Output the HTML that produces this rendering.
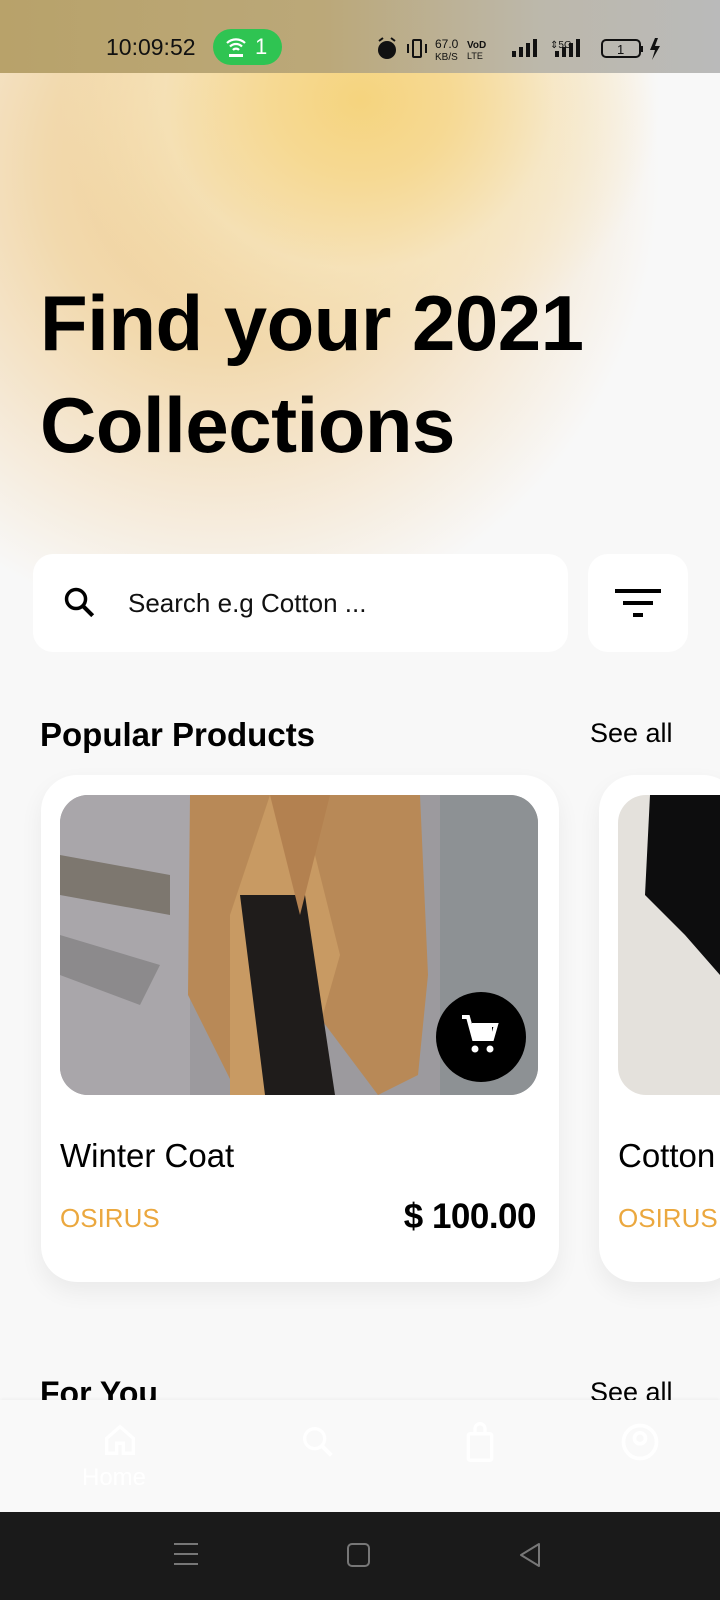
<!DOCTYPE html>
<html><head><meta charset="utf-8"><style>
*{margin:0;padding:0;box-sizing:border-box}
body{width:720px;height:1600px;overflow:hidden;background:#f8f8f8;font-family:"Liberation Sans",sans-serif;position:relative}
.abs{position:absolute}
#bg{left:0;top:0;width:720px;height:720px;background:radial-gradient(ellipse 300px 260px at 360px 100px,#f5d47e 0%,#f6d993 30%,rgba(247,230,190,0.7) 65%,rgba(248,248,248,0) 100%),radial-gradient(ellipse 440px 460px at 220px 170px,#efce94 0%,#f2d9ad 40%,#f5e8d4 70%,rgba(248,248,248,0) 100%)}
#sb{left:0;top:0;width:720px;height:73px;background:linear-gradient(90deg,#b8a26a 0%,#bba879 45%,#bcb8ab 75%,#bababa 100%);font-size:23px;color:#111}
h1{position:absolute;left:40px;top:272px;font-size:78px;line-height:102px;font-weight:bold;color:#000;letter-spacing:-0.5px}
.box{background:#fff;border-radius:20px}
.t{color:#000}
</style></head><body>
<div id="bg" class="abs"></div>
<div id="sb" class="abs">
 <div class="abs" style="left:106px;top:34px;">10:09:52</div>
 <div class="abs" style="left:213px;top:29px;width:69px;height:36px;border-radius:18px;background:#2fc452;color:#fff">
  <svg class="abs" style="left:11px;top:6px" width="24" height="24" viewBox="0 0 24 24"><path d="M3 8a13 13 0 0 1 18 0M6 11.5a8.5 8.5 0 0 1 12 0M9 15a4 4 0 0 1 6 0" stroke="#fff" stroke-width="2.2" fill="none"/><rect x="5" y="19" width="14" height="3" fill="#fff"/></svg>
  <span class="abs" style="left:42px;top:5px;font-size:22px">1</span></div>
 <svg class="abs" style="left:375px;top:36px" width="300" height="26" viewBox="0 0 300 26">
  <circle cx="12" cy="14" r="9" fill="#111"/><path d="M4 5l4-3M20 5l-4-3" stroke="#111" stroke-width="2"/>
  <rect x="38" y="4" width="8" height="17" rx="1" stroke="#111" stroke-width="2" fill="none"/><path d="M33 8v9M51 8v9" stroke="#111" stroke-width="2"/>
  <text x="60" y="12" font-size="12" font-family="Liberation Sans" fill="#111">67.0</text><text x="60" y="24" font-size="10" font-family="Liberation Sans" fill="#111">KB/S</text>
  <text x="92" y="12" font-size="10" font-family="Liberation Sans" font-weight="bold" fill="#111">VoD</text><text x="92" y="23" font-size="9" font-family="Liberation Sans" fill="#111">LTE</text>
  <rect x="137" y="15" width="4" height="6" fill="#111"/><rect x="144" y="11" width="4" height="10" fill="#111"/><rect x="151" y="7" width="4" height="14" fill="#111"/><rect x="158" y="3" width="4" height="18" fill="#111"/>
  <text x="175" y="12" font-size="10" font-family="Liberation Sans" fill="#111">⇕5G</text><rect x="180" y="15" width="4" height="6" fill="#111"/><rect x="187" y="11" width="4" height="10" fill="#111"/><rect x="194" y="7" width="4" height="14" fill="#111"/><rect x="201" y="3" width="4" height="18" fill="#111"/>
  <rect x="227" y="4" width="38" height="17" rx="4" stroke="#111" stroke-width="2" fill="none"/><rect x="266" y="10" width="2" height="6" fill="#111"/><text x="242" y="18" font-size="13" font-family="Liberation Sans" fill="#111">1</text>
  <path d="M280 2l-5 12h5l-3 10 8-14h-5l3-8z" fill="#111"/>
 </svg>
</div>
<h1>Find your 2021<br>Collections</h1>
<div class="abs box" style="left:33px;top:554px;width:535px;height:98px">
 <svg class="abs" style="left:28px;top:30px" width="38" height="38" viewBox="0 0 24 24"><circle cx="9.5" cy="9.5" r="6" stroke="#000" stroke-width="2.2" fill="none"/><path d="M14 14l6 6" stroke="#000" stroke-width="2.6"/></svg>
 <div class="abs" style="left:95px;top:34px;font-size:26px;color:#111">Search e.g Cotton ...</div>
</div>
<div class="abs box" style="left:588px;top:554px;width:100px;height:98px">
 <div class="abs" style="left:27px;top:35px;width:46px;height:4px;background:#000"></div>
 <div class="abs" style="left:35px;top:47px;width:30px;height:4px;background:#000"></div>
 <div class="abs" style="left:45px;top:59px;width:10px;height:4px;background:#000"></div>
</div>
<div class="abs t" style="left:40px;top:716px;font-size:33px;font-weight:bold">Popular Products</div>
<div class="abs t" style="left:590px;top:718px;font-size:27px">See all</div>
<div class="abs" style="left:41px;top:775px;width:518px;height:507px;background:#fff;border-radius:36px;box-shadow:0 10px 24px rgba(0,0,0,0.06)"></div>
<div class="abs" style="left:599px;top:775px;width:140px;height:507px;background:#fff;border-radius:36px;box-shadow:0 10px 24px rgba(0,0,0,0.06)"></div>
<svg class="abs" style="left:60px;top:795px" width="478" height="300" viewBox="0 0 478 300">
 <defs><clipPath id="c1"><rect width="478" height="300" rx="28"/></clipPath></defs>
 <g clip-path="url(#c1)">
 <rect width="478" height="300" fill="#9c9a9e"/>
 <path d="M0 0h130v300H0z" fill="#a9a6aa"/><path d="M0 60l110 20v40L0 100z" fill="#7d776f"/><path d="M0 140l100 30-20 40L0 180z" fill="#8c8a8c"/>
 <path d="M380 0h98v300H380z" fill="#8d9194"/>
 <path d="M130 0h230l8 180-10 100-40 20-60-80-30 80h-50l-50-100z" fill="#b88957"/>
 <path d="M170 120l40-120h30l40 160-40 140h-70z" fill="#c89a63"/>
 <path d="M180 100l25 200h70l-30-200z" fill="#1f1c1b"/>
 <path d="M210 0l30 120 30-120z" fill="#b38150"/>
 <circle cx="421" cy="242" r="45" fill="#000"/>
 <path d="M402 222h6l6 22h18l4-14h-24" stroke="#fff" stroke-width="4" fill="none"/><rect x="412" y="232" width="20" height="10" fill="#fff"/><circle cx="415" cy="254" r="3.5" fill="#fff"/><circle cx="430" cy="254" r="3.5" fill="#fff"/>
 </g>
</svg>
<svg class="abs" style="left:618px;top:795px" width="102" height="300" viewBox="0 0 102 300">
 <defs><clipPath id="c2"><rect width="160" height="300" rx="28"/></clipPath></defs>
 <g clip-path="url(#c2)"><rect width="160" height="300" fill="#e4e1dc"/><path d="M32 0h70v180l-35-40-40-40z" fill="#0d0d0e"/></g>
</svg>
<div class="abs t" style="left:60px;top:1137px;font-size:33px">Winter Coat</div>
<div class="abs" style="left:60px;top:1203px;font-size:26px;color:#eba83f">OSIRUS</div>
<div class="abs t" style="left:380px;top:1197px;font-size:35px;font-weight:bold;width:156px;text-align:right;white-space:nowrap;letter-spacing:-0.5px">$ 100.00</div>
<div class="abs t" style="left:618px;top:1137px;font-size:33px">Cotton</div>
<div class="abs" style="left:618px;top:1203px;font-size:26px;color:#eba83f">OSIRUS</div>
<div class="abs t" style="left:40px;top:1375px;font-size:32px;font-weight:bold">For You</div>
<div class="abs t" style="left:590px;top:1377px;font-size:27px">See all</div>
<div class="abs" style="left:0;top:1400px;width:720px;height:112px;background:#f9f9f9;box-shadow:0 -1px 3px rgba(0,0,0,0.04)">
 <svg class="abs" style="left:100px;top:20px" width="40" height="40" viewBox="0 0 24 24"><path d="M4 11l8-7 8 7v9h-6v-6h-4v6H4z" stroke="#fff" stroke-width="2" fill="none"/></svg>
 <div class="abs" style="left:82px;top:64px;font-size:24px;color:#fff">Home</div>
 <svg class="abs" style="left:298px;top:22px" width="40" height="40" viewBox="0 0 24 24"><circle cx="10" cy="10" r="6" stroke="#fff" stroke-width="2" fill="none"/><path d="M14 14l6 6" stroke="#fff" stroke-width="2.4"/></svg>
 <svg class="abs" style="left:460px;top:20px" width="40" height="44" viewBox="0 0 24 26"><rect x="5" y="8" width="14" height="16" rx="1" stroke="#fff" stroke-width="2" fill="none"/><path d="M9 8V5a3 3 0 0 1 6 0v3" stroke="#fff" stroke-width="2" fill="none"/></svg>
 <svg class="abs" style="left:618px;top:20px" width="44" height="44" viewBox="0 0 24 24"><circle cx="12" cy="12" r="9" stroke="#fff" stroke-width="2" fill="none"/><circle cx="12" cy="10" r="3" stroke="#fff" stroke-width="2" fill="none"/></svg>
</div>
<div class="abs" style="left:0;top:1512px;width:720px;height:88px;background:#1a1a1a">
 <div class="abs" style="left:174px;top:31px;width:24px;height:2px;background:#777"></div>
 <div class="abs" style="left:174px;top:41px;width:24px;height:2px;background:#777"></div>
 <div class="abs" style="left:174px;top:51px;width:24px;height:2px;background:#777"></div>
 <div class="abs" style="left:347px;top:31px;width:23px;height:24px;border:2px solid #777;border-radius:5px"></div>
 <svg class="abs" style="left:518px;top:30px" width="24" height="26" viewBox="0 0 24 26"><path d="M21 2v22L3 13z" stroke="#777" stroke-width="2" fill="none" stroke-linejoin="round"/></svg>
</div>
</body></html>
